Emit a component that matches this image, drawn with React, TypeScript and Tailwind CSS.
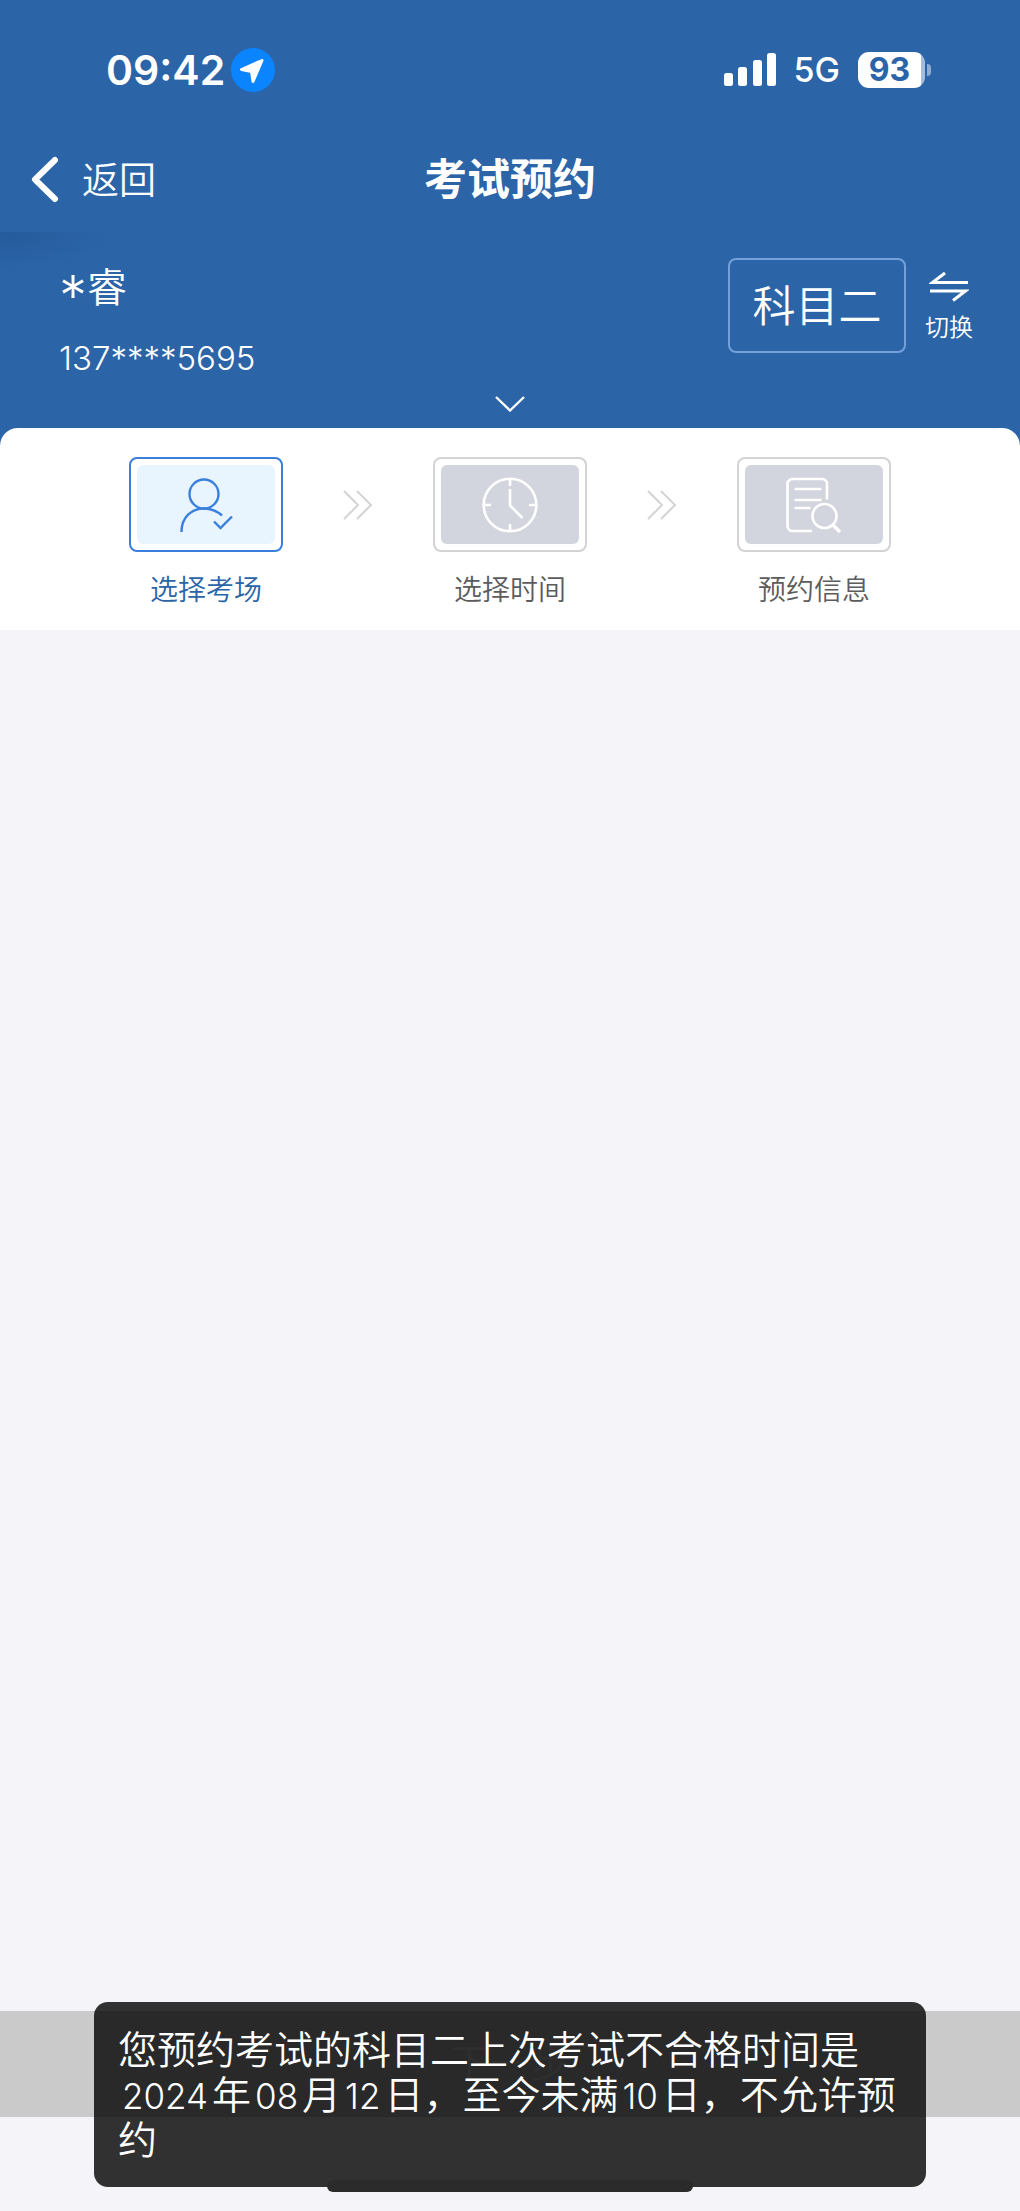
import React from 'react';
import type { ReactNode } from 'react';

type Step = {
    id: string;
    label: string;
    active: boolean;
    icon: ReactNode;
};

const UserCheckIcon = () => (
    <svg width="56" height="56" viewBox="0 0 56 56" fill="none" stroke="currentColor" strokeWidth="2.4" aria-hidden="true">
        <circle cx="26" cy="17" r="14.5" />
        <path d="M3.5 55C3.5 40 13.5 31.5 26 31.5c7 0 13 2.5 18 7" />
        <path d="M36 44.5l6.5 6.5L54 39.5" />
    </svg>
);

const ClockIcon = () => (
    <svg width="56" height="56" viewBox="0 0 56 56" fill="none" stroke="currentColor" strokeWidth="2.6" aria-hidden="true">
        <circle cx="28" cy="28" r="26.3" />
        <path d="M28 2v7M28 47v7M2 28h7M47 28h7" />
        <path d="M28 12v16.5L40.5 41" />
    </svg>
);

const SearchDocIcon = () => (
    <svg width="56" height="56" viewBox="0 0 56 56" fill="none" stroke="currentColor" strokeWidth="2.6" aria-hidden="true">
        <path d="M26 54H6.5a5 5 0 0 1-5-5V7a5 5 0 0 1 5-5H36a5 5 0 0 1 5 5v15.5" />
        <path d="M8.5 12H35.5M8.5 23H35.5M8.5 31H24.5" />
        <circle cx="38.5" cy="39" r="12" />
        <path d="M47 48l7 7" strokeWidth="3.5" />
    </svg>
);

const DoubleArrow = () => (
    <svg width="30" height="30" viewBox="0 0 30 30" fill="none" stroke="#d4d4d6" strokeWidth="2" aria-hidden="true">
        <path d="M1 1l14 14L1 29M14 1l14 14-14 14" />
    </svg>
);

const STEPS: Step[] = [
    { id: 'venue', label: '选择考场', active: true, icon: <UserCheckIcon /> },
    { id: 'time', label: '选择时间', active: false, icon: <ClockIcon /> },
    { id: 'info', label: '预约信息', active: false, icon: <SearchDocIcon /> },
];

function StatusBar() {
    return (
        <div className="flex h-[126px] items-center justify-between pt-[14px] pr-[89px] pl-[106px]">
            <div className="flex items-center gap-[6px]">
                <span className="text-[41px] leading-[44px] font-semibold">09:42</span>
                <svg width="44" height="44" viewBox="0 0 44 44" aria-hidden="true">
                    <circle cx="22" cy="22" r="22" fill="#0a84ff" />
                    <path
                        d="M31 12.5L10.5 21.5L20.5 23.5L22 33.5Z"
                        fill="#fff"
                        stroke="#fff"
                        strokeWidth="3"
                        strokeLinejoin="round"
                    />
                </svg>
            </div>
            <div className="flex items-center gap-[18px]">
                <svg width="52" height="34" viewBox="0 0 52 34" fill="currentColor" aria-hidden="true">
                    <rect x="0" y="20" width="9" height="13" rx="2.5" />
                    <rect x="14" y="14" width="9" height="19" rx="2.5" />
                    <rect x="29" y="7" width="9" height="26" rx="2.5" />
                    <rect x="43" y="0" width="9" height="33" rx="2.5" />
                </svg>
                <span className="text-[34px] leading-[44px] font-medium">5G</span>
                <div className="flex items-center gap-[2px]">
                    <div className="h-9 w-[67px] rounded-[11px] bg-[linear-gradient(90deg,#fff_63px,#a5bddb_63px)] pr-1 text-center text-[32px] leading-[36px] font-bold text-[#2b64a7]">
                        93
                    </div>
                    <div className="h-3 w-1 rounded-r-full bg-[#8fadd2]" />
                </div>
            </div>
        </div>
    );
}

function NavBar() {
    return (
        <div className="grid h-[106px] grid-cols-[1fr_auto_1fr] items-center px-[30px]">
            <button type="button" className="flex items-end gap-[22px] justify-self-start text-[37px] leading-[44px]">
                <svg width="30" height="48" viewBox="0 0 30 48" fill="none" stroke="currentColor" strokeWidth="6" strokeLinecap="round" strokeLinejoin="round" aria-hidden="true">
                    <path d="M25 5L5 24.5L25 44" />
                </svg>
                返回
            </button>
            <h1 className="text-[43px] leading-[48px] font-bold">考试预约</h1>
        </div>
    );
}

function Profile() {
    return (
        <section className="flex flex-col items-center bg-[radial-gradient(110px_36px_at_0_0,#245b9d,transparent)] pt-[26px] pb-4">
            <div className="flex w-full items-start justify-between pr-[47px] pl-[59px]">
                <div className="flex flex-col gap-5">
                    <div className="flex text-[40px] leading-[60px]">
                        <span className="self-end text-[56px] leading-[44px] font-light">*</span>
                        <span>睿</span>
                    </div>
                    <div className="text-[33px] leading-[40px]">137****5695</div>
                </div>
                <div className="flex items-start gap-[19px]">
                    <div className="flex h-[95px] w-[178px] items-center justify-center rounded-lg border-2 border-[#74a0dc] text-[43px] leading-[48px]">
                        科目二
                    </div>
                    <button type="button" className="flex flex-col items-center gap-[10px] pt-3 text-[24px] leading-[32px]">
                        <svg width="40" height="32" viewBox="0 0 40 32" fill="none" stroke="currentColor" strokeWidth="3" aria-hidden="true">
                            <path d="M16 3L3.5 12.5H39" />
                            <path d="M1 21H36.5L24 30.5" />
                        </svg>
                        切换
                    </button>
                </div>
            </div>
            <button type="button" aria-label="展开" className="mt-[18px]">
                <svg width="30" height="16" viewBox="0 0 30 16" fill="none" stroke="currentColor" strokeWidth="2.4" aria-hidden="true">
                    <path d="M1 1l14 13.5L29 1" />
                </svg>
            </button>
        </section>
    );
}

function StepCard({ step }: { step: Step }) {
    return (
        <div className={step.active ? 'text-[#2b64a7]' : 'text-[#5c5c5c]'}>
            <div className={`h-[95px] w-[154px] rounded-lg border-2 p-[6px] ${step.active ? 'border-[#3a7fdb]' : 'border-[#d3d3d5]'}`}>
                <div
                    className={`flex h-full items-center justify-center rounded-md ${
                        step.active ? 'bg-[#e9f5fe] text-[#3a7fdb]' : 'bg-[#d2d5dd] text-white'
                    }`}
                >
                    {step.icon}
                </div>
            </div>
            <div className="mt-[18px] text-center text-[28px] leading-[40px]">{step.label}</div>
        </div>
    );
}

function Num({ children }: { children: ReactNode }) {
    return <span className="mx-1 text-[35px] leading-none">{children}</span>;
}

function App() {
    return (
        <div className="flex min-h-screen flex-col bg-[#f4f4f9] font-['Inter','Noto_Sans_CJK_SC',sans-serif] font-[350]">
            <header className="bg-[#2b64a7] text-white">
                <StatusBar />
                <NavBar />
                <Profile />
            </header>

            {/* Booking steps */}
            <main className="flex-1">
                <div className="bg-[linear-gradient(#2b64a7_20px,#fff_20px)]">
                    <ol className="flex justify-center rounded-t-[18px] bg-white pt-[29px] pb-5">
                        {STEPS.map((step, index) => (
                            <li key={step.id} className="flex">
                                {index > 0 && (
                                    <div className="flex h-[95px] w-[150px] items-center justify-center">
                                        <DoubleArrow />
                                    </div>
                                )}
                                <StepCard step={step} />
                            </li>
                        ))}
                    </ol>
                </div>
            </main>

            <footer className="relative pb-[94px]">
                <button type="button" className="h-[106px] w-full bg-[#cacaca] text-[40px] leading-[48px] text-[#e4e4e4]">
                    下一步
                </button>

                {/* Toast */}
                <div
                    role="alert"
                    className="absolute inset-x-[94px] bottom-6 rounded-[14px] bg-black/80 px-6 py-[25px] text-[39px] leading-[45px] whitespace-nowrap text-white"
                >
                    <div>您预约考试的科目二上次考试不合格时间是</div>
                    <div>
                        <Num>2024</Num>年<Num>08</Num>月<Num>12</Num>日，至今未满<Num>10</Num>日，不允许预
                    </div>
                    <div>约</div>
                </div>

                {/* Home indicator */}
                <div className="absolute inset-x-[327px] bottom-[19px] h-3 rounded-full bg-[#2b2b2b]" />
            </footer>
        </div>
    );
}

export default App;
